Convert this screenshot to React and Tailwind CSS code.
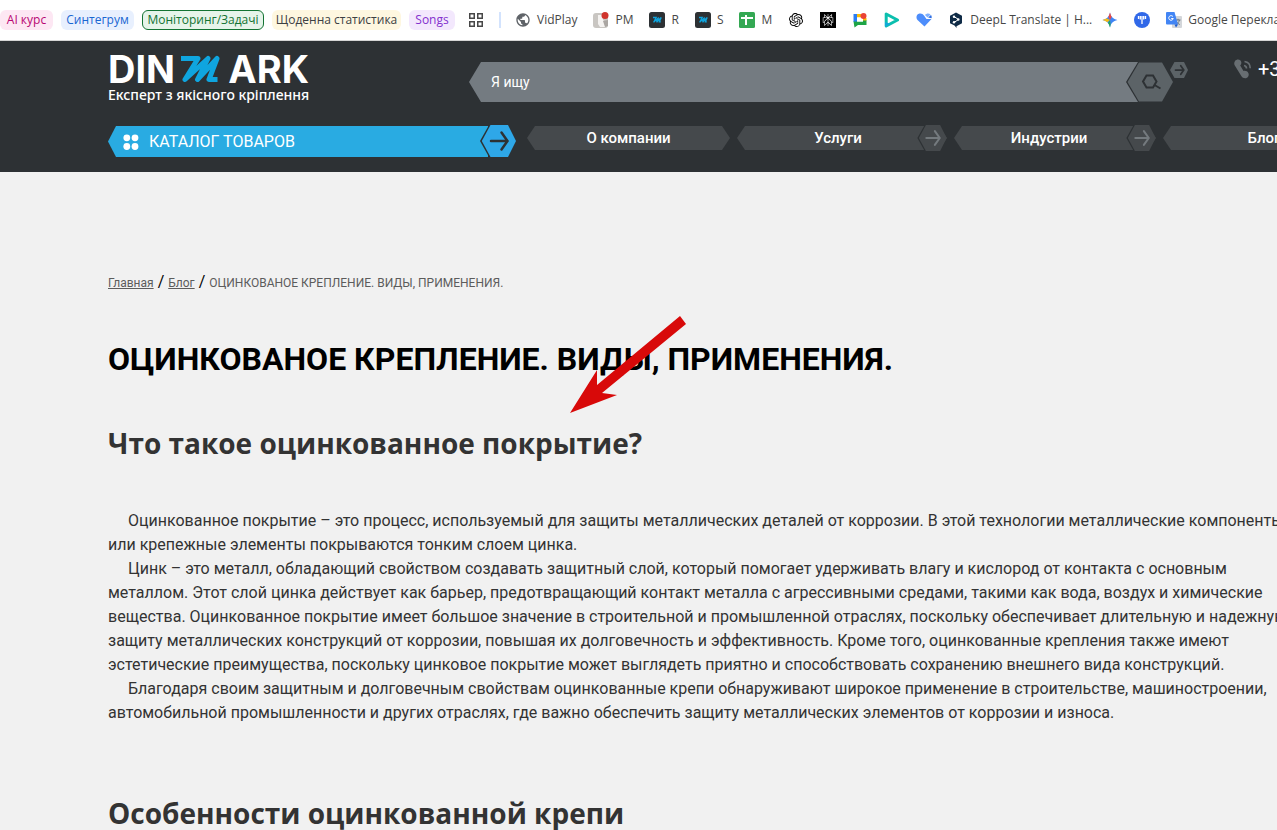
import { MdPublic } from "react-icons/md";
import { SiOpenai, SiPerplexity } from "react-icons/si";

const pills = [
  { title: "AI курс", className: "w-[53px] bg-[#fde7f3] text-[#b80672]" },
  { title: "Синтегрум", className: "w-[73px] bg-[#e8f0fe] text-[#1967d2]" },
  {
    title: "Моніторинг/Задачі",
    className: "w-[122px] bg-[#e6f4ea] text-[#137333] border border-[#137333]",
  },
  { title: "Щоденна статистика", className: "w-[129px] bg-[#fef7e0] text-[#3c4043]" },
  { title: "Songs", className: "w-[46px] bg-[#f3e8fd] text-[#8430ce]" },
];

const bookmarks = [
  { icon: GlobeIcon, title: "VidPlay" },
  { icon: PmIcon, title: "PM" },
  { icon: DinmarkIcon, title: "R" },
  { icon: DinmarkIcon, title: "S" },
  { icon: SheetIcon, title: "M" },
  { icon: OpenaiIcon, label: "ChatGPT" },
  { icon: PerplexityIcon, label: "Perplexity" },
  { icon: ChatIcon, label: "Chat" },
  { icon: PlayIcon, label: "Play" },
  { icon: HeartIcon, label: "Heart" },
  { icon: DeeplIcon, title: "DeepL Translate | H...", wide: true },
  { icon: GeminiIcon, label: "Gemini" },
  { icon: ForkIcon, label: "Fork" },
  { icon: TranslateIcon, title: "Google Перекладач" },
];

const menu = [
  { title: "О компании", className: "w-[203px]" },
  { title: "Услуги", className: "w-[210px] pr-2", arrow: true },
  { title: "Индустрии", className: "w-[202px] pr-3", arrow: true },
  { title: "Блог", className: "w-[210px] pr-2", arrow: true },
];

const paragraphs = [
  "Оцинкованное покрытие – это процесс, используемый для защиты металлических деталей от коррозии. В этой технологии металлические компоненты или крепежные элементы покрываются тонким слоем цинка.",
  "Цинк – это металл, обладающий свойством создавать защитный слой, который помогает удерживать влагу и кислород от контакта с основным металлом. Этот слой цинка действует как барьер, предотвращающий контакт металла с агрессивными средами, такими как вода, воздух и химические вещества. Оцинкованное покрытие имеет большое значение в строительной и промышленной отраслях, поскольку обеспечивает длительную и надежную защиту металлических конструкций от коррозии, повышая их долговечность и эффективность. Кроме того, оцинкованные крепления также имеют эстетические преимущества, поскольку цинковое покрытие может выглядеть приятно и способствовать сохранению внешнего вида конструкций.",
  "Благодаря своим защитным и долговечным свойствам оцинкованные крепи обнаруживают широкое применение в строительстве, машиностроении, автомобильной промышленности и других отраслях, где важно обеспечить защиту металлических элементов от коррозии и износа.",
];

function GlobeIcon() {
  return <MdPublic className="size-4 shrink-0 text-[#5f6368]" />;
}

function PmIcon() {
  return (
    <svg viewBox="0 0 16 16" className="size-4 shrink-0">
      <rect width="15" height="15" y="1" rx="3" fill="#c9c6c2" />
      <path d="M5 3h5v5l4 3-2 4H7l-2-3z" fill="#f4f2f0" />
      <path d="M10 9l5-1v6l-3 1z" fill="#aaa6a2" />
      <circle cx="12" cy="3.5" r="3.5" fill="#d0342c" />
    </svg>
  );
}

function DinmarkIcon() {
  return (
    <svg viewBox="0 0 16 16" className="size-4 shrink-0">
      <rect width="16" height="16" rx="2.5" fill="#2d3134" />
      <path
        d="M4 5.5h3.2L4.6 10.3 9.6 5.6 7.6 10.3 12.2 5.5 10.4 9.8h1.4"
        fill="none"
        stroke="#0fa3dc"
        strokeWidth="1.3"
      />
    </svg>
  );
}

function SheetIcon() {
  return (
    <svg viewBox="0 0 16 16" className="size-4 shrink-0">
      <rect width="16" height="16" rx="1.5" fill="#34a853" />
      <path d="M2 6h12M7 3v10" stroke="#fff" strokeWidth="2" />
    </svg>
  );
}

function OpenaiIcon() {
  return <SiOpenai className="size-4 shrink-0 p-px text-black" />;
}

function PerplexityIcon() {
  return <SiPerplexity className="size-4 shrink-0 bg-black p-0.5 text-white" />;
}

function ChatIcon() {
  return (
    <svg viewBox="0 0 16 16" className="size-4 shrink-0">
      <path d="M1.5 2H5v8H1.5z" fill="#2a7df4" />
      <path d="M5 2h4v3.5H5z" fill="#fbbc04" />
      <path d="M1.5 9.5H11V8h3.5v5H6l-3.5 2.5z" fill="#1ea446" />
      <path d="M11 6h3.5v2.5H11z" fill="#fbbc04" />
      <path d="M5 5.5h5l1 1.5v2.5H5z" fill="#fff" />
      <circle cx="11.5" cy="4" r="3" fill="#ea4335" />
    </svg>
  );
}

function PlayIcon() {
  return (
    <svg viewBox="0 0 16 16" className="size-4 shrink-0">
      <path
        d="M2.2 2v12l11.3-6z"
        fill="none"
        stroke="#0bbfae"
        strokeWidth="3"
        strokeLinejoin="round"
      />
      <path d="M1 10v5l6-3" fill="#10a9d8" />
    </svg>
  );
}

function HeartIcon() {
  return (
    <svg viewBox="0 0 16 16" className="size-4 shrink-0">
      <path
        d="M8.5 14.5L1.5 8C-.5 5.5.5 2 3.5 1.5c2-.3 3.5.5 4.5 2l2.5 3.5h5z"
        fill="#4d8dfb"
      />
      <path d="M9 3c1.5-1.8 4-2 5.5-.5L11.5 5.5z" fill="#7eb0ff" />
      <path d="M12 5.5l3-2.5c.7 1.2.9 2.2.5 3.2z" fill="#2f6fe4" />
    </svg>
  );
}

function DeeplIcon() {
  return (
    <svg viewBox="0 0 16 16" className="size-4 shrink-0">
      <path d="M8 .5l6 3.3v7.4L8.5 14.3V16L6.5 13.6 2 11.2V3.8z" fill="#0f2b46" />
      <path d="M6 4.5l4.5 3L6 10.5" fill="none" stroke="#fff" strokeWidth="1" />
      <circle cx="6" cy="4.7" r="1.2" fill="#fff" />
      <circle cx="10.3" cy="7.5" r="1.2" fill="#fff" />
      <circle cx="6" cy="10.3" r="1.2" fill="#fff" />
    </svg>
  );
}

function GeminiIcon() {
  return (
    <svg viewBox="0 0 16 16" className="size-4 shrink-0">
      <defs>
        <clipPath id="spark">
          <path d="M8 .5C9 5 11 7 15.5 8 11 9 9 11 8 15.5 7 11 5 9 .5 8 5 7 7 5 8 .5z" />
        </clipPath>
      </defs>
      <g clipPath="url(#spark)">
        <rect width="16" height="16" fill="#3f85f4" />
        <path d="M4 0h8L8 8z" fill="#f0483e" />
        <path d="M0 4l8 4-5 4H0z" fill="#f7bd14" />
        <path d="M3 16l5-8 1 8z" fill="#27a853" />
      </g>
    </svg>
  );
}

function ForkIcon() {
  return (
    <svg viewBox="0 0 16 16" className="size-4 shrink-0">
      <circle cx="8" cy="8" r="8" fill="#3068e8" />
      <path
        d="M4.5 4v3M11.5 4v3M8 4v8M6.3 4v3.5M9.7 4v3.5"
        fill="none"
        stroke="#fff"
        strokeWidth="1.3"
      />
    </svg>
  );
}

function TranslateIcon() {
  return (
    <svg viewBox="0 0 16 16" className="size-4 shrink-0">
      <rect x="6" y="4" width="10" height="12" rx="1" fill="#d3d6da" />
      <path
        d="M9.5 8h5M12 6.8V8M13.5 8c-.5 2-2 3.5-3.5 4.5M10.5 9.5c.8 1.5 2 2.5 3.3 3"
        stroke="#6b7780"
        fill="none"
      />
      <path d="M1 0h7.5L12 12.5H1a1 1 0 01-1-1V1a1 1 0 011-1z" fill="#4285f4" />
      <path d="M7 4.7A2.3 2.3 0 107.3 6.5H5.2" fill="none" stroke="#fff" />
      <path d="M8.5 12.5H12L10 15.5z" fill="#1b5bd0" />
    </svg>
  );
}

function GridIcon() {
  return (
    <svg viewBox="0 0 14 14" className="size-3.5 shrink-0" fill="none" stroke="#474747" strokeWidth="1.5">
      <path d="M.75.75h4.5v4.5H.75zM8.75.75h4.5v4.5h-4.5zM.75 8.75h4.5v4.5H.75zM8.75 8.75h4.5v4.5h-4.5z" />
    </svg>
  );
}

function ArrowHex({ className, fill, edge, arrow, strokeWidth = 2.5 }) {
  return (
    <svg viewBox="0 0 36 32" className={className}>
      <path d="M9 0L0 16l9 16h2V0z" fill={edge} />
      <path d="M10.5 0h17.5L36 16l-8 16H10.5L1.8 16z" fill={fill} />
      <path
        d="M11 16h16M21.5 7.5L27.5 16l-6 8.5"
        fill="none"
        stroke={arrow}
        strokeWidth={strokeWidth}
        strokeLinecap="round"
      />
    </svg>
  );
}

function Logo() {
  return (
    <a href="#" className="block w-[201px] shrink-0 text-white">
      <span className="flex h-8 items-center justify-between font-[Inter] text-[38px] leading-8 font-bold">
        <span>DIN</span>
        <svg viewBox="0 0 40 28" className="-ml-1 h-7 w-10" fill="none">
          <path
            d="M1 3.500h17L5 24.500 28 3.500 17.500 24.500 37 3.500 29 24.500H37.500"
            stroke="#0fa5df"
            strokeWidth="5"
            strokeLinejoin="round"
          />
        </svg>
        <span>ARK</span>
      </span>
      <span className="block font-['Noto_Sans'] text-[14px] leading-5 font-medium whitespace-nowrap">
        Експерт з якісного кріплення
      </span>
    </a>
  );
}

function BookmarksBar() {
  return (
    <nav className="flex h-10 items-center bg-white font-['Open_Sans'] text-xs whitespace-nowrap text-[#474747]">
      <div className="flex shrink-0 gap-2">
        {pills.map((p) => (
          <a
            key={p.title}
            href="#"
            className={`flex h-5 items-center justify-center rounded-md font-medium ${p.className}`}
          >
            {p.title}
          </a>
        ))}
      </div>
      <button type="button" aria-label="Apps" className="ml-3.5 shrink-0">
        <GridIcon />
      </button>
      <div className="mx-4 h-4 w-0.5 shrink-0 bg-[#d3e3fd]" />
      <div className="-ml-0.5 flex shrink-0 gap-4">
        {bookmarks.map(({ icon: Icon, title, label, wide }, i) => (
          <a
            key={i}
            href="#"
            aria-label={title || label}
            className={`flex items-center gap-1.5 ${wide ? "w-[138px]" : ""}`}
          >
            <Icon />
            {title}
          </a>
        ))}
      </div>
    </nav>
  );
}

function Header() {
  return (
    <header className="h-[132px] border-t border-[#d5d5d5] bg-[#2d3134] pt-3 pl-27 text-white">
      <div className="flex">
        <Logo />
        <form className="mt-[9px] ml-40 flex flex-1">
          <label htmlFor="search" className="sr-only">
            Поиск
          </label>
          <input
            id="search"
            type="text"
            placeholder="Я ищу"
            className="h-10 min-w-0 flex-1 bg-[#747b81] pl-[22px] text-sm text-white outline-none [clip-path:polygon(12px_0,100%_0,100%_100%,12px_100%,0_50%)] placeholder:text-white"
          />
          <button type="button" aria-label="Найти" className="relative -ml-3 h-10 w-12 shrink-0">
            <svg viewBox="0 0 48 40" className="h-10 w-12">
              <path d="M12 0L0 20l12 20h2V0z" fill="#2d3134" />
              <path d="M13 .5h23L47 20 36 39.5H13L1.5 20z" fill="#5c6367" />
              <path
                d="M20.5 13.5h6.5l3.5 6-3.5 6h-6.500l-3.500-6zM28.5 23l6 3.5"
                fill="none"
                stroke="#2d3134"
                strokeWidth="2"
              />
            </svg>
          </button>
          <button type="button" aria-label="Дальше" className="-ml-1 h-4 w-[18px] shrink-0">
            <ArrowHex
              className="h-4 w-[18px]"
              fill="#5c6367"
              edge="#5c6367"
              arrow="#2d3134"
              strokeWidth={3.5}
            />
          </button>
        </form>
        <a
          href="#"
          className="mt-1 ml-[46px] flex h-6 w-[43px] shrink-0 items-center gap-1.5 text-xl whitespace-nowrap"
        >
          <svg viewBox="0 0 18 20" className="h-5 w-[18px] shrink-0">
            <path
              d="M1 2C2.5 0 5 0 6.5 1.500c1.3 1.500 1.2 3.500-.3 5L9.500 12c2-.5 4 .3 5 2.200.8 2-.3 4.500-2.500 5-2 .3-3.700-.5-4.700-2.200L.8 6.500C0 5 0 3.500 1 2z"
              fill="#686e72"
            />
            <path
              d="M10 6.500c1.500.3 2.500 1.500 2.500 3M10.500 2.500c3.500.5 5.700 3 5.700 6.800"
              fill="none"
              stroke="#686e72"
              strokeWidth="1.7"
            />
          </svg>
          +3
        </a>
      </div>
      <div className="mt-5 flex">
        <button type="button" className="flex h-8 w-[408px] shrink-0 items-end text-base">
          <span className="flex h-[31px] flex-1 items-center gap-2.5 bg-[#29abe2] pl-[15px] [clip-path:polygon(8px_0,100%_0,100%_100%,8px_100%,0_50%)]">
            <svg viewBox="0 0 16 16" className="size-4" fill="#fff">
              <circle cx="3.8" cy="3.8" r="3.4" />
              <circle cx="12" cy="3.8" r="3.4" />
              <circle cx="3.8" cy="12.5" r="3.4" />
              <circle cx="12" cy="12.5" r="3.4" />
            </svg>
            КАТАЛОГ ТОВАРОВ
          </span>
          <ArrowHex
            className="relative -ml-2 h-8 w-9 shrink-0"
            fill="#2ea7e8"
            edge="#2d3134"
            arrow="#2d3134"
          />
        </button>
        <nav className="mt-px ml-[11px] flex shrink-0 gap-[7px] text-[15px] font-medium">
          {menu.map((m) => (
            <a
              key={m.title}
              href="#"
              className={`relative flex h-6 items-center justify-center ${m.className}`}
            >
              <span className="absolute inset-0 bg-[#45494c] [clip-path:polygon(8px_0,calc(100%-8px)_0,100%_50%,calc(100%-8px)_100%,8px_100%,0_50%)]" />
              <span className="relative">{m.title}</span>
              {m.arrow && (
                <ArrowHex
                  className="absolute -top-px right-0 h-[26px] w-[30px]"
                  fill="#45494c"
                  edge="#2d3134"
                  arrow="#747a7e"
                />
              )}
            </a>
          ))}
        </nav>
      </div>
    </header>
  );
}

function Breadcrumbs() {
  return (
    <nav className="flex items-baseline gap-1 text-xs leading-6 text-[#5c5c5c]">
      <a href="#" className="underline">
        Главная
      </a>
      <span className="text-base leading-6 text-black">/</span>
      <a href="#" className="underline">
        Блог
      </a>
      <span className="text-base leading-6 text-black">/</span>
      <span>ОЦИНКОВАНОЕ КРЕПЛЕНИЕ. ВИДЫ, ПРИМЕНЕНИЯ.</span>
    </nav>
  );
}

export default function App() {
  return (
    <div className="h-screen overflow-hidden bg-[#f1f1f1] font-[Roboto,sans-serif]">
      <BookmarksBar />
      <Header />
      <main className="relative -mr-4 pt-[98px] pl-27 text-[#333]">
        <Breadcrumbs />
        <h1 className="mt-11 text-[32px] leading-10 font-bold text-black">
          ОЦИНКОВАНОЕ КРЕПЛЕНИЕ. ВИДЫ, ПРИМЕНЕНИЯ.
        </h1>
        <h2 className="mt-11 font-['Open_Sans'] text-[28px] leading-10 font-bold">
          Что такое оцинкованное покрытие?
        </h2>
        <div className="mt-[46px] text-base leading-6">
          {paragraphs.map((text, i) => (
            <p key={i} className="indent-5">
              {text}
            </p>
          ))}
        </div>
        <h2 className="mt-[68px] font-['Open_Sans'] text-[28px] leading-10 font-bold">
          Особенности оцинкованной крепи
        </h2>
        {/* red pointer drawn over the headings */}
        <svg viewBox="0 0 118 98" className="absolute top-[143px] left-[569px] h-[98px] w-[118px]">
          <path d="M1 98L28 55V70L111 1l6 8L33 78l15 2z" fill="#d80909" />
        </svg>
      </main>
    </div>
  );
}
